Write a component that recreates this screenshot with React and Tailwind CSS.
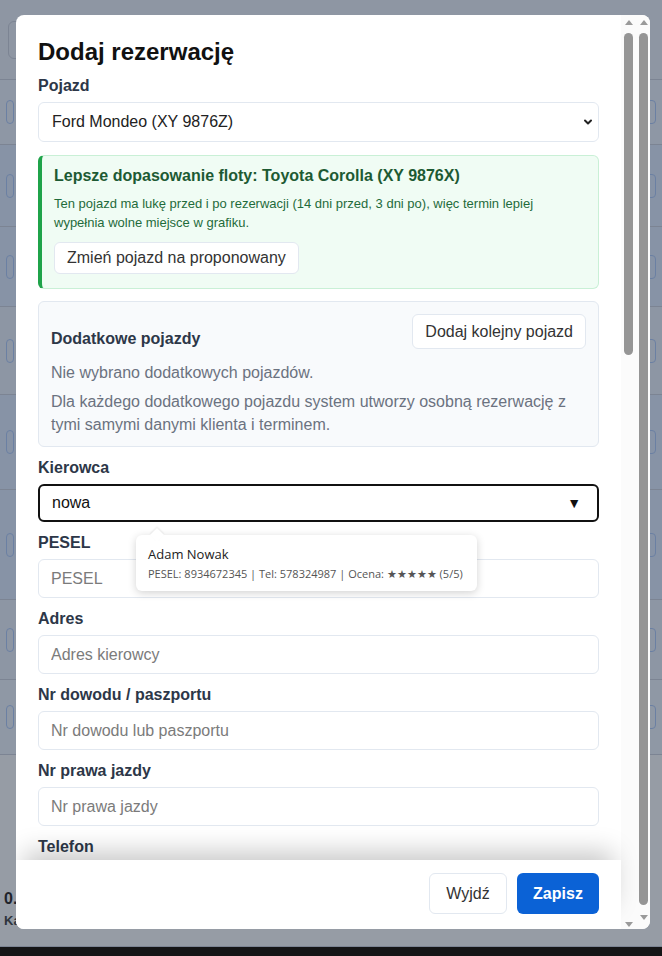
import React from "react";

const fields = [
  { label: "PESEL", placeholder: "PESEL" },
  { label: "Adres", placeholder: "Adres kierowcy" },
  { label: "Nr dowodu / paszportu", placeholder: "Nr dowodu lub paszportu" },
  { label: "Nr prawa jazdy", placeholder: "Nr prawa jazdy" },
];

const rows = [
  { h: "h-[65px]", bg: "bg-[#8e97a5]" },
  { h: "h-[82px]", bg: "bg-[#8793a6]" },
  { h: "h-[80px]", bg: "bg-[#8793a6]" },
  { h: "h-[88px]", bg: "bg-[#8d96a4]" },
  { h: "h-[95px]", bg: "bg-[#8793a6]" },
  { h: "h-[110px]", bg: "bg-[#8793a6]" },
  { h: "h-[80px]", bg: "bg-[#8d96a4]" },
  { h: "h-[75px]", bg: "bg-[#8f98a5]" },
];

function Backdrop() {
  // the dimmed app page sitting behind the modal
  return (
    <div className="flex h-full flex-col bg-[#8b93a0]">
      <div className="flex h-20 items-center border-b border-[#7c8493] bg-[#8e96a3] px-2">
        <div className="h-[38px] w-40 rounded-md border border-[#7c8493] bg-[#8e96a3]" />
      </div>
      {rows.map((r, i) => (
        <div key={i} className={`flex items-center justify-between border-b border-[#7c8493] px-[6px] ${r.h} ${r.bg}`}>
          <div className="h-6 w-2 rounded border border-[#6b80a3]" />
          <div className="h-6 w-3 rounded border border-[#6b80a3]" />
        </div>
      ))}
      <div className="flex flex-1 flex-col justify-end border-b border-[#7c8493] bg-[#969ca5] px-1 pb-4 text-[13px] font-bold text-[#1f242c]">
        <span className="text-[16px]">0.</span>
        <span className="text-[#2e343d]">Ka</span>
      </div>
      <div className="h-[9px] bg-[#151516]" />
    </div>
  );
}

function Label({ children }) {
  return (
    <div className="mb-[6px] h-5 text-[16px] font-bold leading-5 text-[#2d3748]">
      {children}
    </div>
  );
}

function Arrow({ up }) {
  return (
    <div
      className={
        up
          ? "h-0 w-0 border-x-[4px] border-b-[5px] border-x-transparent border-b-[#9a9a9a]"
          : "h-0 w-0 border-x-[4px] border-t-[5px] border-x-transparent border-t-[#9a9a9a]"
      }
    />
  );
}

export default function App() {
  return (
    <div
      className="relative h-[956px] w-[662px] overflow-hidden bg-[#8b93a0]"
      style={{ fontFamily: '"Liberation Sans", Arial, sans-serif' }}
    >
      <Backdrop />

      {/* modal layer */}
      <div className="absolute inset-0 flex items-start pl-4 pt-[15px]">
        <div className="flex h-[914px] w-[634px] shrink-0 overflow-hidden rounded-lg bg-white">
          <div className="flex w-[605px] shrink-0 flex-col">
            <div className="flex-1 overflow-hidden px-[22px] pt-[22px]">
              <h2 className="mb-[10px] text-[24px] font-bold leading-[29px] text-[#111]">
                Dodaj rezerwację
              </h2>

              <Label>Pojazd</Label>
              <div className="flex h-10 items-center justify-between rounded-md border border-[#e2e8f0] pl-[13px] pr-[4px] text-[16px] text-[#222]">
                <span>Ford Mondeo (XY 9876Z)</span>
                <svg width="12" height="12" viewBox="0 0 24 24" fill="none" stroke="#222" strokeWidth="4" strokeLinecap="round" strokeLinejoin="round">
                  <path d="M6 9l6 6 6-6" />
                </svg>
              </div>

              <div className="mt-[13px] rounded-md border border-l-4 border-[#c9f0d6] border-l-[#1fa34a] bg-[#f0fcf4] pb-[14px] pl-3 pr-4 pt-[10px]">
                <div className="text-[16px] font-bold leading-5 text-[#1d5a33]">
                  Lepsze dopasowanie floty: Toyota Corolla (XY 9876X)
                </div>
                <p className="mt-2 text-[13px] leading-[19px] text-[#1f6b3b]">
                  Ten pojazd ma lukę przed i po rezerwacji (14 dni przed, 3 dni po), więc termin lepiej wypełnia wolne miejsce w grafiku.
                </p>
                <button className="mt-[10px] h-8 rounded-md border border-[#e2e8f0] bg-white px-3 text-[16px] text-[#333]">
                  Zmień pojazd na proponowany
                </button>
              </div>

              <div className="mt-3 rounded-md border border-[#e2e8f0] bg-[#f8fafc] px-3 pb-[10px] pt-3">
                <div className="flex items-end justify-between">
                  <div className="text-[16px] font-bold leading-5 text-[#2d3748]">
                    Dodatkowe pojazdy
                  </div>
                  <button className="h-[35px] rounded-md border border-[#e2e8f0] bg-white px-3 text-[16px] text-[#333]">
                    Dodaj kolejny pojazd
                  </button>
                </div>
                <p className="mt-[13px] text-[16px] leading-[22px] text-[#6b7280]">
                  Nie wybrano dodatkowych pojazdów.
                </p>
                <p className="mt-[6px] text-[16px] leading-[23px] text-[#6b7280]">
                  Dla każdego dodatkowego pojazdu system utworzy osobną rezerwację z tymi samymi danymi klienta i terminem.
                </p>
              </div>

              <div className="relative mt-[11px]">
                <Label>Kierowca</Label>
                <div className="flex h-[38px] items-center justify-between rounded-md border-2 border-[#111] pl-3 pr-[16px] text-[16px] text-[#111]">
                  <span>nowa</span>
                  <span className="text-[14px]">▼</span>
                </div>

                {/* suggestion popup */}
                <div
                  className="absolute left-[98px] top-[77px] z-10 w-[341px] rounded-md bg-white px-3 pb-[9px] pt-[10px] shadow-[0_2px_8px_rgba(0,0,0,0.18)]"
                  style={{ fontFamily: '"Open Sans", "Noto Sans", sans-serif' }}
                >
                  <div className="absolute -top-[5px] left-[16px] h-[10px] w-[10px] rotate-45 bg-white shadow-[-1px_-1px_2px_rgba(0,0,0,0.08)]" />
                  <div className="relative text-[13px] leading-[18px] text-[#222]">Adam Nowak</div>
                  <div className="mt-[3px] whitespace-nowrap text-[11px] leading-[16px] text-[#555]">
                    PESEL: 8934672345 | Tel: 578324987 | Ocena: ★★★★★ (5/5)
                  </div>
                </div>
              </div>

              {fields.map((f) => (
                <div key={f.label} className="mt-[11px]">
                  <Label>{f.label}</Label>
                  <input
                    readOnly
                    placeholder={f.placeholder}
                    className="h-[39px] w-full rounded-md border border-[#e2e8f0] px-3 text-[16px] text-[#222] outline-none placeholder:text-[#7b7b7b]"
                  />
                </div>
              ))}

              <div className="mt-[11px]">
                <Label>Telefon</Label>
              </div>
            </div>

            <div className="relative z-10 flex h-[69px] shrink-0 justify-end gap-[10px] bg-white pr-[22px] pt-[13px] shadow-[0_-16px_26px_-8px_rgba(0,0,0,0.22)]">
              <button className="h-[41px] w-[78px] rounded-md border border-[#e2e8f0] bg-white text-[16px] text-[#333]">
                Wyjdź
              </button>
              <button className="h-[41px] w-[82px] rounded-md bg-[#0b62d6] text-[16px] font-bold text-white">
                Zapisz
              </button>
            </div>
          </div>

          {/* scrollbars */}
          <div className="flex flex-1 gap-[6px] bg-[#fbfbfb] pl-[3px]">
            <div className="flex w-[9px] flex-col items-center pt-[5px]">
              <Arrow up />
              <div className="mt-[8px] h-[322px] w-[9px] rounded-full bg-[#959595]" />
              <div className="flex-1" />
              <div className="mb-[2px]">
                <Arrow />
              </div>
            </div>
            <div className="flex w-[9px] flex-col items-center pt-[5px]">
              <Arrow up />
              <div className="mt-[8px] h-[872px] w-[9px] rounded-full bg-[#959595]" />
              <div className="mt-[10px]">
                <Arrow />
              </div>
            </div>
          </div>
        </div>
      </div>
    </div>
  );
}
